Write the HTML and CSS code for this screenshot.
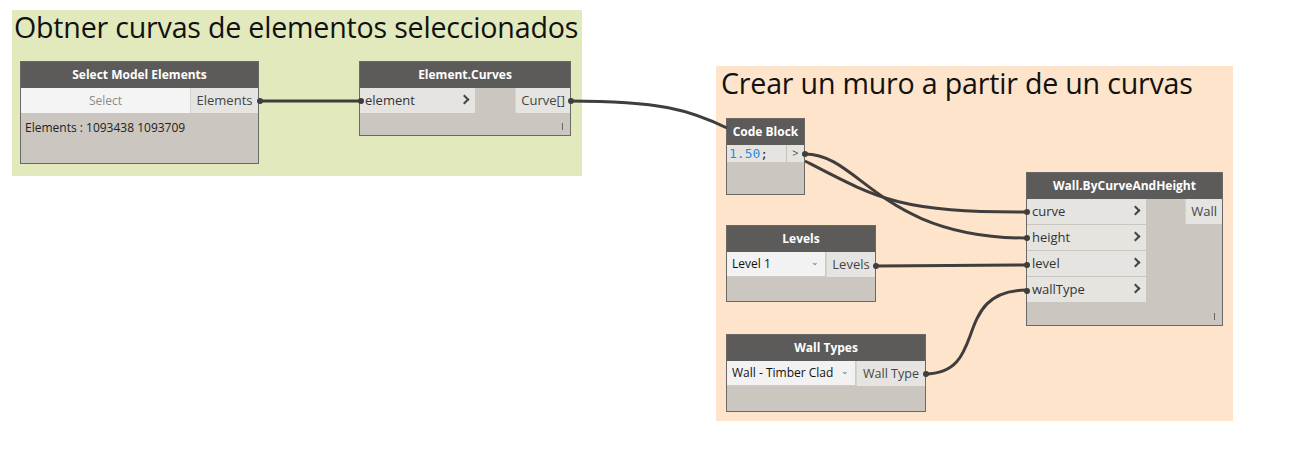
FILE: index.html
```html
<!DOCTYPE html>
<html>
<head>
<meta charset="utf-8">
<link rel="stylesheet" href="styles.css">
</head>
<body>
<div class="canvas">
  <div class="group group-green">
    <div class="group-title">Obtner curvas de elementos seleccionados</div>
  </div>
  <div class="group group-peach">
    <div class="group-title">Crear un muro a partir de un curvas</div>
  </div>

  <div class="node n-select">
    <div class="node-head">Select Model Elements</div>
    <div class="row">
      <div class="btn-select">Select</div>
      <div class="out-port">Elements</div>
    </div>
    <div class="node-info">Elements : 1093438 1093709</div>
  </div>

  <div class="node n-curves">
    <div class="node-head">Element.Curves</div>
    <div class="row">
      <div class="inputs">
        <div class="in-port">element<span class="chev"></span></div>
      </div>
      <div class="fill"></div>
      <div class="outputs"><div class="out-port">Curve[]</div></div>
    </div>
    <div class="node-foot"><span class="lace"></span></div>
  </div>

  <div class="node n-code">
    <div class="node-head">Code Block</div>
    <div class="row">
      <div class="code"><span class="num">1.50</span>;</div>
      <div class="code-port">&gt;</div>
    </div>
  </div>

  <div class="node n-levels">
    <div class="node-head">Levels</div>
    <div class="row">
      <div class="dropdown">Level 1<span class="caret">&#8964;</span></div>
      <div class="out-port">Levels</div>
    </div>
  </div>

  <div class="node n-types">
    <div class="node-head">Wall Types</div>
    <div class="row">
      <div class="dropdown">Wall - Timber Clad<span class="caret">&#8964;</span></div>
      <div class="out-port">Wall Type</div>
    </div>
  </div>

  <div class="node n-wall">
    <div class="node-head">Wall.ByCurveAndHeight</div>
    <div class="row">
      <div class="inputs">
        <div class="in-port">curve<span class="chev"></span></div>
        <div class="in-port">height<span class="chev"></span></div>
        <div class="in-port">level<span class="chev"></span></div>
        <div class="in-port">wallType<span class="chev"></span></div>
      </div>
      <div class="fill"></div>
      <div class="outputs"><div class="out-port">Wall</div></div>
    </div>
    <div class="node-foot"><span class="lace"></span></div>
  </div>

  <svg class="wires" width="1310" height="454" viewBox="0 0 1310 454">
    <g fill="none" stroke="#3f3e3d" stroke-width="3">
      <path d="M259 101 C300 101 320 101 361 101"/>
      <path d="M570 101 C660 101 690 110 727 128"/>
      <path d="M805 154 C860 154 880 238 1027 238"/>
      <path d="M805 161 C880 200 900 212 1027 212"/>
      <path d="M875 266 C940 266 960 265 1027 265"/>
      <path d="M925 374 C990 374 950 290 1027 290"/>
    </g>
    <g fill="#3f3e3d">
      <circle cx="260" cy="101" r="3"/>
      <circle cx="361" cy="101" r="3"/>
      <circle cx="571" cy="101" r="3"/>
      <circle cx="805" cy="154" r="3"/>
      <circle cx="1027" cy="212" r="3"/>
      <circle cx="1027" cy="238" r="3"/>
      <circle cx="1027" cy="265" r="3"/>
      <circle cx="1027" cy="291" r="3"/>
      <circle cx="876" cy="266" r="3"/>
      <circle cx="926" cy="374" r="3"/>
    </g>
  </svg>
</div>
</body>
</html>
```

FILE: styles.css
```css
* { box-sizing: border-box; }
html, body { margin: 0; padding: 0; background: #ffffff; }
.canvas {
  position: relative;
  width: 1310px;
  height: 454px;
  overflow: hidden;
  background: #ffffff;
  font-family: "Open Sans", "Noto Sans", sans-serif;
}
.group { position: absolute; }
.group-green { left: 12px; top: 10px; width: 570px; height: 166px; background: #e1e9bd; }
.group-peach { left: 716px; top: 66px; width: 517px; height: 355px; background: #fee4cb; }
.group-title {
  font-family: "Open Sans", "Noto Sans", sans-serif;
  font-size: 28.6px;
  color: #111;
  line-height: 34px;
  padding-left: 2px;
  letter-spacing: -0.2px;
  white-space: nowrap;
}
.group-peach .group-title { padding-left: 5px; }

.node {
  position: absolute;
  background: #cbc6bf;
  border: 1px solid #6b6967;
  font-size: 12px;
  color: #333;
  display: flex;
  flex-direction: column;
}
.node-head {
  height: 26px;
  background: #5d5b59;
  color: #fff;
  font-weight: bold;
  font-size: 12px;
  text-align: center;
  line-height: 26px;
  white-space: nowrap;
}
.row { display: flex; align-items: flex-start; }
.fill { flex: 1; }
.inputs { display: flex; flex-direction: column; gap: 1px; }
.in-port {
  height: 25px;
  line-height: 25px;
  background: #e6e4e1;
  padding-left: 5px;
  position: relative;
  color: #333;
  font-size: 13px;
  white-space: nowrap;
}
.chev {
  position: absolute;
  right: 7px;
  top: 8px;
  width: 7px;
  height: 7px;
  border-right: 2px solid #444;
  border-top: 2px solid #444;
  transform: rotate(45deg);
}
.out-port {
  height: 25px;
  line-height: 25px;
  background: #e6e4e1;
  padding: 0 5px;
  color: #444;
  font-size: 13px;
  text-align: right;
  border-left: 1px solid #d6d3cf;
  white-space: nowrap;
}
.node-foot { flex: 1; position: relative; }
.lace {
  position: absolute;
  right: 7px;
  bottom: 5px;
  width: 1px;
  height: 7px;
  background: #666;
}

.n-select { left: 20px; top: 61px; width: 239px; height: 103px; }
.btn-select {
  width: 169px;
  height: 25px;
  line-height: 25px;
  background: #f4f4f4;
  color: #8a8a8a;
  text-align: center;
  font-size: 12px;
}
.n-select .out-port { flex: 1; text-align: center; padding: 0 3px; }
.node-info { padding: 6px 4px; font-size: 12px; color: #222; }

.n-curves { left: 359px; top: 61px; width: 212px; height: 75px; }
.n-curves .in-port { width: 115px; }
.n-curves .out-port { width: 55px; }

.n-code { left: 726px; top: 118px; width: 79px; height: 77px; }
.n-code .row { height: 17px; }
.code {
  width: 59px;
  height: 17px;
  line-height: 17px;
  background: #e6e4e1;
  font-family: "DejaVu Sans Mono", "Liberation Mono", monospace;
  font-size: 13px;
  padding-left: 2px;
  color: #333;
}
.code .num { color: #2b8de0; }
.code-port {
  flex: 1;
  height: 17px;
  line-height: 16px;
  background: #e6e4e1;
  border-left: 1px solid #c4c0bb;
  font-size: 11px;
  color: #444;
  text-align: center;
}

.n-levels { left: 726px; top: 225px; width: 150px; height: 77px; }
.n-types { left: 726px; top: 334px; width: 200px; height: 78px; }
.dropdown {
  height: 25px;
  line-height: 24px;
  background: #f2f2f2;
  border-right: 1px solid #cfcbc6;
  border-bottom: 1px solid #cfcbc6;
  padding-left: 5px;
  padding-right: 6px;
  color: #111;
  font-size: 12px;
  display: flex;
  justify-content: space-between;
  white-space: nowrap;
}
.caret { font-size: 9px; color: #666; line-height: 20px; }
.n-levels .dropdown { width: 99px; }
.n-levels .out-port { flex: 1; text-align: center; }
.n-types .dropdown { width: 129px; }
.n-types .out-port { flex: 1; text-align: center; padding: 0 2px; font-size: 12.5px; }

.n-wall { left: 1026px; top: 172px; width: 197px; height: 154px; }
.n-wall .in-port { width: 119px; }
.n-wall .out-port { width: 37px; }

.wires { position: absolute; left: 0; top: 0; pointer-events: none; }
```
